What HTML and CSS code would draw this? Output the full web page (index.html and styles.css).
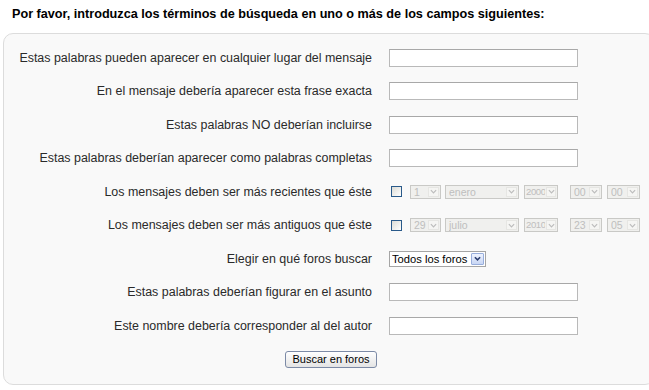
FILE: index.html
```html
<!doctype html>
<html lang="es">
	<head>
		<meta charset="UTF-8" />
		<title>Buscar en foros</title>
		<link rel="stylesheet" href="styles.css">
	</head>
	<body>
		<h2 class="intro">Por favor, introduzca los términos de búsqueda en uno o más de los campos siguientes:</h2>

		<form class="search">
			<label for="words">Estas palabras pueden aparecer en cualquier lugar del mensaje</label>
			<input class="text" id="words" type="text">

			<label for="phrase">En el mensaje debería aparecer esta frase exacta</label>
			<input class="text" id="phrase" type="text">

			<label for="notwords">Estas palabras NO deberían incluirse</label>
			<input class="text" id="notwords" type="text">

			<label for="fullwords">Estas palabras deberían aparecer como palabras completas</label>
			<input class="text" id="fullwords" type="text">

			<label>Los mensajes deben ser más recientes que éste</label>
			<div class="date">
				<input class="check" type="checkbox">
				<span class="sel off day"><select disabled><option>1</option></select><span class="arrow"><svg viewBox="0 0 8 5"><path d="M1 1L4 4L7 1"/></svg></span></span>
				<span class="sel off month"><select disabled><option>enero</option></select><span class="arrow"><svg viewBox="0 0 8 5"><path d="M1 1L4 4L7 1"/></svg></span></span>
				<span class="sel off year"><select disabled><option>2000</option></select><span class="arrow"><svg viewBox="0 0 8 5"><path d="M1 1L4 4L7 1"/></svg></span></span>
				<span class="sel off hour"><select disabled><option>00</option></select><span class="arrow"><svg viewBox="0 0 8 5"><path d="M1 1L4 4L7 1"/></svg></span></span>
				<span class="sel off minute"><select disabled><option>00</option></select><span class="arrow"><svg viewBox="0 0 8 5"><path d="M1 1L4 4L7 1"/></svg></span></span>
			</div>

			<label>Los mensajes deben ser más antiguos que éste</label>
			<div class="date">
				<input class="check" type="checkbox">
				<span class="sel off day"><select disabled><option>29</option></select><span class="arrow"><svg viewBox="0 0 8 5"><path d="M1 1L4 4L7 1"/></svg></span></span>
				<span class="sel off month"><select disabled><option>julio</option></select><span class="arrow"><svg viewBox="0 0 8 5"><path d="M1 1L4 4L7 1"/></svg></span></span>
				<span class="sel off year"><select disabled><option>2010</option></select><span class="arrow"><svg viewBox="0 0 8 5"><path d="M1 1L4 4L7 1"/></svg></span></span>
				<span class="sel off hour"><select disabled><option>23</option></select><span class="arrow"><svg viewBox="0 0 8 5"><path d="M1 1L4 4L7 1"/></svg></span></span>
				<span class="sel off minute"><select disabled><option>05</option></select><span class="arrow"><svg viewBox="0 0 8 5"><path d="M1 1L4 4L7 1"/></svg></span></span>
			</div>

			<label for="forum">Elegir en qué foros buscar</label>
			<div>
				<span class="sel forum"><select id="forum"><option>Todos los foros</option></select><span class="arrow"><svg viewBox="0 0 8 5"><path d="M1 1L4 4L7 1"/></svg></span></span>
			</div>

			<label for="subject">Estas palabras deberían figurar en el asunto</label>
			<input class="text" id="subject" type="text">

			<label for="author">Este nombre debería corresponder al del autor</label>
			<input class="text" id="author" type="text">

			<div class="actions">
				<button type="submit">Buscar en foros</button>
			</div>
		</form>
	</body>
</html>
```

FILE: styles.css
```css
html, body {
	overflow: hidden;
}
body {
	margin: 0;
	background: #fff;
	font-family: "Liberation Sans", Arial, sans-serif;
	font-size: 12.45px;
	color: #2a2a2a;
}
.intro {
	margin: 0 0 11px;
	padding: 6px 12px 0;
	font-size: 12.65px;
	line-height: 16px;
	font-weight: bold;
	color: #000;
}
.search {
	display: grid;
	grid-template-columns: 368px 1fr;
	grid-auto-rows: 33.5px;
	column-gap: 17px;
	align-items: center;
	width: 650px;
	margin-left: 3px;
	padding: 7px 0 8px;
	background: #f9f9f9;
	border: 1px solid #dcdcdc;
	border-radius: 10px;
}
.search label {
	text-align: right;
	white-space: nowrap;
}
.text {
	box-sizing: border-box;
	width: 189px;
	height: 18px;
	margin: 0;
	padding: 1px 3px;
	background: #fff;
	border: 1px solid #b9b9b9;
	border-top-color: #a8a8a8;
	font: inherit;
}
.date {
	display: flex;
	align-items: center;
}
.check {
	appearance: none;
	box-sizing: border-box;
	width: 11px;
	height: 11px;
	margin: 0 8px 0 2px;
	border: 1px solid #2a5a8a;
	background: linear-gradient(135deg, #dcdcd6, #fff);
}
.sel {
	box-sizing: border-box;
	display: inline-flex;
	align-items: stretch;
	height: 14px;
	border: 1px solid #c6c6c6;
	background: #fff;
}
.sel select {
	appearance: none;
	flex: 1;
	min-width: 0;
	margin: 0;
	padding: 0 0 0 3px;
	border: 0;
	background: transparent;
	font-family: "Liberation Sans", Arial, sans-serif;
	font-size: 10.5px;
	line-height: 12px;
	color: #000;
	outline: none;
}
.sel .arrow {
	display: flex;
	align-items: center;
	justify-content: center;
	flex: none;
	width: 11px;
	margin: 1px;
	box-sizing: border-box;
}
.sel svg {
	width: 7px;
	height: 5px;
	fill: none;
	stroke-width: 1.4;
}
.sel.off {
	background: #f0f0ee;
	border-color: #c9c9c6;
}
.sel.off select {
	color: #aaa;
}
.sel.off .arrow {
	border: 1px solid #e6e6e3;
	background: #f5f5f3;
}
.sel.off svg {
	stroke: #bdbdbd;
}
.day { width: 31px; margin-right: 4px; }
.month { width: 74px; margin-right: 5px; }
.year { width: 34px; margin-right: 12px; }
.hour { width: 32px; margin-right: 5px; }
.minute { width: 33px; }
.year select {
	padding: 0 0 0 1px;
	font-size: 9.6px;
	letter-spacing: -0.4px;
}
.year .arrow {
	width: 10px;
}
.forum {
	width: 97px;
	height: 16px;
	border-color: #a5a5a5;
}
.forum select {
	font-size: 11.2px;
	padding-left: 2px;
}
.forum .arrow {
	border: 1px solid #98aedc;
	border-radius: 1px;
	background: linear-gradient(#eef3ff, #c8d6f4);
	margin: 1px 1px 1px 0;
	width: 13px;
}
.forum svg {
	stroke: #2b3d6e;
	stroke-width: 1.8;
}
.actions {
	grid-column: 1 / -1;
	justify-self: center;
}
.actions button {
	box-sizing: border-box;
	width: 92px;
	height: 17px;
	margin-left: 4px;
	padding: 0;
	border: 1px solid #7c8aa6;
	border-radius: 3px;
	background: linear-gradient(#fff, #e4e4e4);
	font-family: inherit;
	font-size: 11px;
	color: #000;
}
```
